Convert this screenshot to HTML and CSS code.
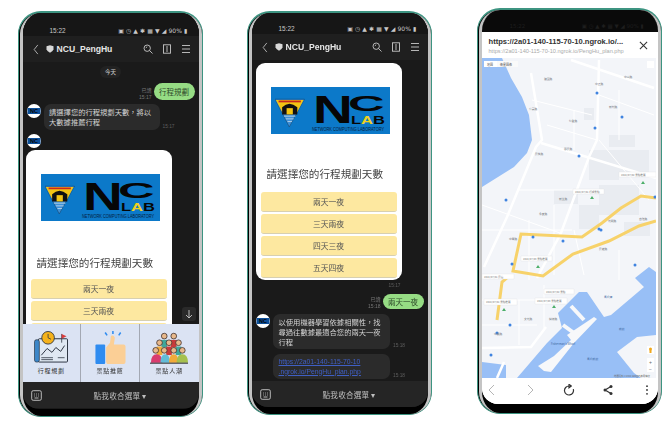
FILE: index.html
```html
<!DOCTYPE html>
<html lang="zh-Hant">
<head>
<meta charset="utf-8">
<title>NCU_PengHu</title>
<link rel="stylesheet" href="styles.css">
</head>
<body>
<svg class="defs" width="0" height="0">
  <symbol id="shield" viewBox="0 0 8 8"><path d="M.5 1.2 4 .3l3.5.9v3Q7 6.500 4 7.700 1 6.500.5 4.200z" class="ic-fill"/></symbol>
  <symbol id="search" viewBox="0 0 10 10"><circle cx="4.200" cy="4.200" r="3.200" class="ic"/><path d="m6.500 6.500 3 3M2.800 3.800l1.400-1" class="ic"/></symbol>
  <symbol id="note" viewBox="0 0 10 10"><rect x="1.500" y=".8" width="7" height="8.400" class="ic"/><path d="M4 3h2M4 5h2M4 7h2" class="ic"/></symbol>
  <symbol id="menu" viewBox="0 0 10 10"><path d="M1 1.500h8M1 5h8M1 8.500h8" class="ic"/></symbol>
  <symbol id="kbd" viewBox="0 0 11 11"><rect x=".7" y=".7" width="9.600" height="9.600" rx="1.500" class="ic"/><path d="M3 4h.8M5 4h.8M7.200 4H8M3 6h.8M5 6h.8M7.200 6H8M3.500 8h4" class="ic"/></symbol>
  <symbol id="badge" viewBox="0 0 37 32">
    <polygon points="0,0 33,0 16,31" class="lg-blue"/>
    <polygon points="1,1 32,1 24,16 9,16" class="lg-yellow"/>
    <path d="M4 2.500h25" class="lg-red"/>
    <path d="M8 9q8-8 17 0v8H8z" class="lg-black"/>
    <rect x="13" y="10" width="7" height="7" class="lg-yellow"/>
    <path d="M10 19h13M12 22h9M14 25h5" class="lg-white"/>
  </symbol>
</svg>

<main class="stage">

  <section class="phone">
    <div class="bezel">
      <div class="screen">
        <div class="status"><span class="time">15:22</span><span class="sys">▣ ◷ ▲ ✱ ▦ ▼ ◢ 90% ▮</span></div>
        <header class="head">
          <svg class="back" viewBox="0 0 6 12"><path d="M5 1 1 6l4 5" class="ic"/></svg>
          <svg class="shield"><use href="#shield"/></svg>
          <b class="name">NCU_PengHu</b>
          <svg class="hicon"><use href="#search"/></svg>
          <svg class="hicon"><use href="#note"/></svg>
          <svg class="hicon"><use href="#menu"/></svg>
        </header>
        <div class="chat chat-a">
          <div class="date"><span>今天</span></div>
          <div class="me">
            <div class="meta"><span>已讀</span><span>15:17</span></div>
            <div class="green">行程規劃</div>
          </div>
          <div class="bot">
            <svg class="ava" viewBox="0 0 14 14"><circle cx="7" cy="7" r="7" class="av-w"/><rect x="0.500" y="4" width="13" height="6" class="av-b"/><text x="7" y="9" class="av-t">NC</text></svg>
            <div class="gray w116">請選擇您的行程規劃天數，將以大數據推薦行程</div>
            <span class="stamp">15:17</span>
          </div>
          <div class="bot">
            <svg class="ava" viewBox="0 0 14 14"><circle cx="7" cy="7" r="7" class="av-w"/><rect x="0.500" y="4" width="13" height="6" class="av-b"/><text x="7" y="9" class="av-t">NC</text></svg>
          </div>
          <div class="card card-a">
            <svg class="logo" viewBox="0 0 119 47">
              <rect width="119" height="47" class="lg-bg"/>
              <use href="#badge" x="4" y="11" width="33" height="31"/>
              <text transform="translate(42 36) scale(1.450 1)" class="lg-n">N</text>
              <text transform="translate(77 24) scale(2.300 1)" class="lg-c">C</text>
              <text x="80" y="37" class="lg-lab" textLength="34" lengthAdjust="spacingAndGlyphs">L<tspan class="lg-a">A</tspan>B</text>
              <text x="41" y="44" class="lg-sub" textLength="72" lengthAdjust="spacingAndGlyphs">NETWORK COMPUTING LABORATORY</text>
            </svg>
            <div class="ctitle">請選擇您的行程規劃天數</div>
            <div class="opts">
              <div class="opt">兩天一夜</div>
              <div class="opt">三天兩夜</div>
              <div class="opt">四天三夜</div>
            </div>
          </div>
          <div class="down"><svg viewBox="0 0 10 10"><path d="M5 1v8M2 6l3 3 3-3" class="ic"/></svg></div>
        </div>
        <nav class="rich">
          <div class="cell">
            <svg class="ri" viewBox="0 0 36 34">
              <rect x="5" y="8" width="30" height="24" rx="1" class="r-board"/>
              <rect x="1" y="9" width="5" height="23" rx="2" class="r-scroll"/>
              <path d="M8 25l6-7 5 4 4-5 5 4 4-6" class="r-line"/>
              <path d="M8 27.500h12M8 29.500h12M25 27.500h7" class="r-thin"/>
              <circle cx="15" cy="7" r="6.500" class="r-clock"/>
              <path d="M15 3v4l3 1.500" class="r-thin"/>
              <path d="M29 3v9" class="r-thin"/>
              <path d="M29 3l5 2.500-5 2.500z" class="r-flag"/>
            </svg>
            <span>行程規劃</span>
          </div>
          <div class="cell">
            <svg class="ri" viewBox="0 0 36 34">
              <rect x="3" y="14" width="10" height="20" rx="1" class="r-cuff"/>
              <path d="M14 17l4-5 1-7q3-1 4 2l-1 7h10q2 0 2 2v16q0 2-2 2H15l-1-2z" class="r-thumb"/>
              <path d="M21 0v3M13 1.500l2 3M29 1.500l-2 3" class="r-ray"/>
            </svg>
            <span>景點推薦</span>
          </div>
          <div class="cell">
            <svg class="ri" viewBox="0 0 40 34">
              <rect x="12" y="9" width="6" height="8" class="c-teal"/><rect x="22" y="9" width="6" height="8" class="c-red"/>
              <rect x="7" y="16" width="6" height="9" class="c-org"/><rect x="17" y="16" width="6" height="9" class="c-red"/><rect x="27" y="16" width="6" height="9" class="c-teal"/>
              <g class="r-heads">
                <circle cx="15" cy="5" r="3"/><circle cx="25" cy="5" r="3"/>
                <circle cx="10" cy="12" r="3"/><circle cx="20" cy="12" r="3"/><circle cx="30" cy="12" r="3"/>
                <circle cx="6" cy="20" r="3"/><circle cx="15" cy="20" r="3"/><circle cx="25" cy="20" r="3"/><circle cx="34" cy="20" r="3"/>
              </g>
              <path d="M1 33q0-9 6-9t6 9z" class="c-pink"/>
              <path d="M11 33q0-9 5-9t5 9z" class="c-blue"/>
              <path d="M20 33q0-9 5-9t5 9z" class="c-org"/>
              <path d="M28 33q0-9 6-9t6 9z" class="c-lime"/>
              <path d="M0 33.500h40" class="r-base"/>
            </svg>
            <span>景點人潮</span>
          </div>
        </nav>
        <footer class="bar">
          <svg class="kbd"><use href="#kbd"/></svg>
          <span class="fold">點我收合選單 ▾</span>
        </footer>
      </div>
    </div>
  </section>

  <section class="phone phone-b">
    <div class="bezel">
      <div class="screen screen-b">
        <div class="status status-b"><span class="time">15:22</span><span class="sys">▣ ◷ ▲ ✱ ▦ ▼ ◢ 90% ▮</span></div>
        <header class="head">
          <svg class="back" viewBox="0 0 6 12"><path d="M5 1 1 6l4 5" class="ic"/></svg>
          <svg class="shield"><use href="#shield"/></svg>
          <b class="name">NCU_PengHu</b>
          <svg class="hicon"><use href="#search"/></svg>
          <svg class="hicon"><use href="#note"/></svg>
          <svg class="hicon"><use href="#menu"/></svg>
        </header>
        <div class="chat chat-b">
          <div class="card card-b">
            <svg class="logo" viewBox="0 0 119 47">
              <rect width="119" height="47" class="lg-bg"/>
              <use href="#badge" x="4" y="11" width="33" height="31"/>
              <text transform="translate(42 36) scale(1.450 1)" class="lg-n">N</text>
              <text transform="translate(77 24) scale(2.300 1)" class="lg-c">C</text>
              <text x="80" y="37" class="lg-lab" textLength="34" lengthAdjust="spacingAndGlyphs">L<tspan class="lg-a">A</tspan>B</text>
              <text x="41" y="44" class="lg-sub" textLength="72" lengthAdjust="spacingAndGlyphs">NETWORK COMPUTING LABORATORY</text>
            </svg>
            <div class="ctitle">請選擇您的行程規劃天數</div>
            <div class="opts">
              <div class="opt">兩天一夜</div>
              <div class="opt">三天兩夜</div>
              <div class="opt">四天三夜</div>
              <div class="opt">五天四夜</div>
            </div>
          </div>
          <div class="cstamp">15:17</div>
          <div class="me me-b">
            <div class="meta"><span>已讀</span><span>15:18</span></div>
            <div class="green">兩天一夜</div>
          </div>
          <div class="bot bot-b">
            <svg class="ava" viewBox="0 0 14 14"><circle cx="7" cy="7" r="7" class="av-w"/><rect x="0.500" y="4" width="13" height="6" class="av-b"/><text x="7" y="9" class="av-t">NC</text></svg>
            <div class="gray w117 tall">以使用機器學習依據相關性，找尋過往數據最適合您的兩天一夜行程</div>
            <span class="stamp">15:18</span>
          </div>
          <div class="bot bot-c">
            <span class="ava-gap"></span>
            <a class="gray w117 link">https://2a01-140-115-70-10<br>.ngrok.io/PengHu_plan.php</a>
            <span class="stamp">15:18</span>
          </div>
        </div>
        <footer class="bar">
          <svg class="kbd"><use href="#kbd"/></svg>
          <span class="fold">點我收合選單 ▾</span>
        </footer>
      </div>
    </div>
  </section>

  <section class="phone phone-c">
    <div class="bezel">
      <div class="screen screen-c">
        <div class="notch"><span>15:22</span><span>▣ ◷ ▲ ✱ ▦ ▼ ◢ 90% ▮</span></div>
        <header class="wtop">
          <div class="wtxt">
            <b>https://2a01-140-115-70-10.ngrok.io/...</b>
            <span>https://2a01-140-115-70-10.ngrok.io/PengHu_plan.php</span>
          </div>
          <svg class="close" viewBox="0 0 10 10"><path d="M1 1l8 8M9 1 1 9" class="ic-dk"/></svg>
        </header>
        <svg class="map" viewBox="483 58 174 320">
          <rect x="483" y="58" width="174" height="320" class="m-land"/>
          <g class="m-block">
            <rect x="590" y="150" width="30" height="30"/><rect x="600" y="185" width="40" height="30"/>
            <rect x="620" y="150" width="30" height="26"/><rect x="555" y="190" width="24" height="14"/>
            <rect x="580" y="205" width="20" height="24"/><rect x="610" y="135" width="26" height="12"/>
            <rect x="625" y="222" width="26" height="14"/><rect x="585" y="108" width="10" height="12"/>
          </g>
          <polygon points="483,58 503,58 512,78 523,97 530,115 533,140 528,153 515,167 483,187" class="m-water"/>
          <polygon points="483,362 507,365 507,378 483,378" class="m-water"/>
          <polygon points="518,378 548,343 563,328 559,313 580,292 588,292 605,317 612,315 645,287 636,278 650,267 657,272 657,335 638,337 618,352 635,373 642,378" class="m-water"/>
          <polygon points="539,366 555,356 572,340 568,335 595,317 598,319 575,343 552,372 545,371" class="m-pier"/>
          <path d="M572 306l13 14M564 325l11 8" class="m-pierline"/>
          <g class="m-road">
            <path d="M532 73l11 67-6 7-29 70-23 50"/>
            <path d="M572 60l83 28"/>
            <path d="M600 60l-2 80-8 17-28 76-24 45"/>
            <path d="M542 143l115 35"/>
            <path d="M482 348l50-1 15-20"/>
            <path d="M498 378l7-16"/>
          </g>
          <g class="m-minor">
            <path d="M483 205l78 28M483 230l90 0M520 190l60 0M533 100l60 15M600 95l55 20M548 125l50 15"/>
            <path d="M530 220v60M555 205v70M575 230l10 45M620 250v30M483 300h70M520 300v45M545 285v45M483 325h55"/>
            <path d="M600 140l50 60M575 110v40M620 90v50"/>
          </g>
          <path d="M657 198l-15-2-20 12-19 15-20 14-61-3-8 37 30 5 30-22 36-13 30-15 17-5" class="m-yellow"/>
          <path d="M510 276l-7 6-5 38" class="m-yellow"/>
          <g class="m-dot">
            <circle cx="598" cy="93" r="1.500"/><circle cx="623" cy="117" r="1.500"/><circle cx="596" cy="128" r="1.500"/>
            <circle cx="580" cy="156" r="1.500"/><circle cx="507" cy="200" r="1.500"/><circle cx="534" cy="237" r="1.500"/>
            <circle cx="564" cy="241" r="1.500"/><circle cx="600" cy="229" r="1.500"/><circle cx="602" cy="230" r="1.500"/>
            <circle cx="513" cy="264" r="1.500"/><circle cx="636" cy="265" r="1.500"/><circle cx="656" cy="197" r="1.500"/>
            <circle cx="511" cy="325" r="1.500"/><circle cx="498" cy="333" r="1.500"/><circle cx="492" cy="355" r="1.500"/>
          </g>
          <g class="m-chip">
            <rect x="574" y="189" width="31" height="5"/>
            <rect x="620" y="172" width="37" height="5"/>
            <rect x="522" y="256" width="31" height="5"/>
            <rect x="483" y="274" width="32" height="5"/>
            <rect x="485" y="299" width="33" height="6"/>
            <rect x="545" y="289" width="30" height="5"/>
            <rect x="536" y="298" width="32" height="6"/>
          </g>
          <g class="m-pin">
            <path d="M591 199l2-3 2 3z"/><path d="M642 184l2-3 2 3z"/><path d="M537 268l2-3 2 3z"/>
            <path d="M503 311l2-3 2 3z"/><path d="M553 308l2-3 2 3z"/>
          </g>
          <g class="m-txt">
            <text x="576" y="193">2022/07/01 行程景點</text><text x="622" y="176">2022/07/02 景點推薦</text>
            <text x="524" y="260">2022/07/03 景點推薦</text><text x="485" y="278">2022/07/01 民宿</text>
            <text x="487" y="303">2022/07/01 景點推薦</text><text x="547" y="293">2022/07/02 景點</text>
            <text x="538" y="302">2022/07/03 景點推薦</text>
          </g>
          <g class="m-rt">
            <text x="536" y="155">民族路</text><text x="596" y="85">中正路</text><text x="565" y="150">惠民路</text>
            <text x="609" y="222">光明路</text><text x="600" y="250">民權路</text><text x="510" y="240">中華路</text>
            <text x="530" y="110">介壽路</text><text x="560" y="200">新生路</text><text x="625" y="78">中山路</text>
            <text x="495" y="335">中興路</text><text x="545" y="80">建國路</text><text x="570" y="122">仁愛路</text>
            <text x="610" y="108">新村路</text><text x="540" y="215">永安路</text><text x="640" y="220">自強路</text>
            <text x="525" y="320">文光路</text><text x="550" y="320">樹德路</text>
          </g>
          <g class="m-wt"><text x="605" y="298">馬公港</text><text x="588" y="360">馬公航道</text><text x="620" y="330">航道</text><text x="552" y="345">Fisherman's Wharf</text></g>
          <rect x="485" y="61" width="13" height="6" class="m-ctl"/><rect x="498" y="61" width="21" height="6" class="m-ctl2"/>
          <text x="488" y="66" class="m-ctxt">地圖</text><text x="501" y="66" class="m-ctxt">衛星圖像</text>
          <rect x="648" y="61" width="7" height="7" class="m-ctl"/>
          <rect x="648" y="346" width="7" height="8" class="m-ctl"/><circle cx="651.500" cy="349" r="1.500" class="m-peg"/><rect x="650.500" y="350" width="2" height="3" class="m-peg"/>
          <rect x="648" y="358" width="7" height="14" class="m-ctl"/>
          <text x="651.500" y="364" class="m-zoom">+</text><text x="651.500" y="371" class="m-zoom">−</text>
          <text x="615" y="377" class="m-attr">地圖資料 ©2022 Google 使用條款</text>
        </svg>
        <footer class="tools">
          <svg viewBox="0 0 12 12"><path d="M8 1 3 6l5 5" class="ic-lt"/></svg>
          <svg viewBox="0 0 12 12"><path d="m4 1 5 5-5 5" class="ic-lt"/></svg>
          <svg viewBox="0 0 12 12"><path d="M6 2a4.500 4.500 0 1 0 4.300 3.200M6 .3v3.400L8.300 2z" class="ic-dk"/></svg>
          <svg viewBox="0 0 12 12"><path d="M9 2.500 3 6l6 3.500" class="ic-dk"/><circle cx="9" cy="2.500" r="1.500" class="dk-fill"/><circle cx="3" cy="6" r="1.500" class="dk-fill"/><circle cx="9" cy="9.500" r="1.500" class="dk-fill"/></svg>
          <svg viewBox="0 0 12 12"><circle cx="6" cy="2.200" r=".9" class="dk-fill"/><circle cx="6" cy="6" r=".9" class="dk-fill"/><circle cx="6" cy="9.800" r=".9" class="dk-fill"/></svg>
        </footer>
      </div>
    </div>
  </section>

</main>
</body>
</html>
```

FILE: styles.css
```css
* { box-sizing: border-box; }
html, body { margin: 0; padding: 0; background: #fff; }
body { width: 672px; height: 421px; overflow: hidden; font-family: "Noto Sans CJK TC", "Noto Sans", sans-serif; }
.defs { position: absolute; }
.stage { display: flex; align-items: flex-start; gap: 44px; padding: 11px 0 0 18px; filter: blur(.4px); }

/* phone frame */
.phone { width: 185px; height: 406px; flex: none; border: solid #3d9481; border-width: 2px 1.500px 1.500px; border-radius: 23px; background: #000; padding: 0 .5px; }
.phone-b { height: 404px; }
.phone-c { height: 406px; margin: -3px 0 0 1px; }
.bezel { height: 100%; border-left: 3.500px solid #c4c4c4; border-right: 3.500px solid #c4c4c4; border-radius: 21px; background: #000; padding-bottom: 7px; overflow: hidden; }
.phone-c .bezel { padding-bottom: 9px; }
.screen { height: 100%; display: flex; flex-direction: column; background: #1a1a1a; border-radius: 14px 14px 16px 16px; overflow: hidden; }

/* status + header */
.status { height: 23px; flex: none; display: flex; align-items: flex-end; justify-content: space-between; padding: 0 11px 1.500px 27px; font-size: 6.400px; line-height: 9px; color: #c8c8c8; background: #161616; font-family: "Liberation Sans", sans-serif; }
.status-b { height: 21px; padding-bottom: 1px; }
.sys { font-size: 6px; letter-spacing: .1px; white-space: nowrap; font-family: "DejaVu Sans", sans-serif; }
.head { height: 26px; flex: none; display: flex; align-items: center; padding: 0 8px 0 10px; background: #1f1f1f; }
.back { width: 6px; height: 11px; margin-right: 7px; }
.shield { width: 8px; height: 8px; margin-right: 3px; }
.name { flex: 1; font: bold 8.600px "Liberation Sans", sans-serif; color: #e6e6e6; }
.hicon { width: 10px; height: 10px; margin-left: 9px; }
.ic { fill: none; stroke: #c8c8c8; stroke-width: .9; }
.ic-fill { fill: #d8d8d8; }
.ic-dk { fill: none; stroke: #333; stroke-width: 1.200; }
.ic-lt { fill: none; stroke: #b5b5b5; stroke-width: 1; }
.dk-fill { fill: #333; }

/* chat */
.chat { position: relative; flex: 1; min-height: 0; overflow: hidden; }
.chat-a { height: 262px; flex: none; }
.date { margin-top: 4px; display: flex; justify-content: center; }
.date span { font-size: 5.500px; line-height: 12px; color: #ccc; background: #222; padding: 0 5px; border-radius: 6px; }
.me { display: flex; justify-content: flex-end; align-items: flex-end; gap: 2px; padding-right: 4px; margin-top: 5px; }
.meta { display: flex; flex-direction: column; align-items: flex-end; font: 5px/6.500px "Liberation Sans", "Noto Sans CJK TC", sans-serif; color: #777; }
.green { width: 41px; height: 17px; border-radius: 9px; background: #96dc84; color: #2e4a2a; font-size: 7.500px; line-height: 17px; text-align: center; }
.me-b { margin-top: 4px; }
.me-b .green { height: 15px; line-height: 15px; }
.bot { display: flex; align-items: flex-start; padding-left: 4px; margin-top: 4px; }
.bot-b { margin-top: 5px; padding-left: 4.500px; }
.bot-c { margin-top: 5px; padding-left: 4.500px; }
.ava { width: 14px; height: 14px; flex: none; }
.ava-gap { width: 14px; flex: none; }
.gray { margin-left: 3px; background: #2b2b2b; border-radius: 7px; padding: 3px 4px 2px 5.500px; font-size: 7.300px; line-height: 10px; color: #d2d2d2; flex: none; }
.w116 { width: 116px; height: 26px; }
.w117 { width: 117px; }
.tall { height: 35px; padding-top: 3px; }
.link { height: 25px; padding-top: 3px; font: 6.800px/9.500px "Liberation Sans", sans-serif; color: #3f5fc4; text-decoration: underline; }
.stamp { align-self: flex-end; margin-left: 3px; font: 4.800px/7px "Liberation Sans", sans-serif; color: #5e5e5e; }
.cstamp { margin: 2px 0 0 137px; font: 4.800px/8px "Liberation Sans", sans-serif; color: #5e5e5e; }

/* flex card */
.card { width: 146px; background: #fff; border-radius: 9px; padding: 24px 5px 0; }
.card-a { margin: 2px 0 0 3px; }
.card-b { margin: 3px 0 0 4px; height: 217px; }
.logo { display: block; width: 119px; height: 47px; margin-left: 10px; }
.ctitle { margin: 34px 0 8px 6px; font-size: 10.600px; line-height: 16px; color: #444; white-space: nowrap; }
.card-b .ctitle { margin-top: 32px; margin-bottom: 10px; }
.opts { display: flex; flex-direction: column; gap: 2.500px; }
.opt { height: 19.500px; background: #fde8a0; border-radius: 3px; border-bottom: 1px solid #d8d0b0; font-size: 7.800px; line-height: 19px; text-align: center; color: #555; }
.down { position: absolute; right: 3px; bottom: 3px; width: 14px; height: 14px; background: #2a2a2a; border-radius: 3px; padding: 2px; }
.down svg { display: block; width: 10px; height: 10px; }

/* logo parts */
.lg-bg { fill: #0c79c9; }
.lg-blue { fill: #3d8fd6; stroke: #123; stroke-width: .4; }
.lg-yellow { fill: #f3c514; }
.lg-red { stroke: #c8281e; stroke-width: 2; fill: none; }
.lg-black { fill: #111; }
.lg-white { stroke: #d6e6f0; stroke-width: .8; fill: none; }
.lg-n { font: 900 38px "Liberation Sans", sans-serif; fill: #060606; }
.lg-c { font: 900 22px "Liberation Sans", sans-serif; fill: #060606; }
.lg-lab { font: bold 10px "Liberation Sans", sans-serif; fill: #060606; }
.lg-a { fill: #f0d020; }
.lg-sub { font: 4.500px "Liberation Sans", sans-serif; fill: #06203a; }
.av-w { fill: #fff; }
.av-b { fill: #0c4f9a; }
.av-t { font: bold 5.500px "Liberation Sans", sans-serif; fill: #050505; text-anchor: middle; }

/* rich menu */
.rich { height: 58px; flex: none; display: grid; grid-template-columns: repeat(3, 1fr); background: #dbe3f3; }
.cell { display: flex; flex-direction: column; align-items: center; justify-content: flex-end; padding-bottom: 7px; border-right: 1px solid #a3a8b3; font-size: 6px; line-height: 8px; letter-spacing: .8px; color: #333; }
.cell:last-child { border-right: 0; }
.ri { width: 38px; height: 33px; margin-bottom: 3px; }
.r-board { fill: #dfe8f2; stroke: #2a3340; stroke-width: 1; }
.r-scroll { fill: #3c86c8; stroke: #2a3340; stroke-width: .7; }
.r-line { fill: none; stroke: #2a3340; stroke-width: 1; }
.r-thin { fill: none; stroke: #2a3340; stroke-width: .8; }
.r-base { fill: none; stroke: #222; stroke-width: 1; }
.r-clock { fill: #f5b21b; stroke: #2a3340; stroke-width: .9; }
.r-flag { fill: #d83c3c; }
.r-cuff { fill: #2f8cf0; }
.r-thumb { fill: #fbcf96; }
.r-ray { stroke: #2f8cf0; stroke-width: 1.600; fill: none; }
.r-heads { fill: #e8b98c; stroke: #3a2a26; stroke-width: .8; }
.c-red { fill: #c83a3a; }
.c-pink { fill: #d93c6e; }
.c-teal { fill: #3fa79a; }
.c-blue { fill: #62bcd8; }
.c-org { fill: #f2ab3a; }
.c-lime { fill: #a6c04e; }

/* bottom bar */
.bar { height: 26px; flex: none; display: flex; align-items: center; padding: 0 8px 0 8px; background: #252525; }
.kbd { width: 11px; height: 11px; flex: none; }
.fold { flex: 1; padding-left: 8px; text-align: center; font-size: 7.600px; letter-spacing: .2px; color: #bdbdbd; }

/* browser phone */
.screen-c { background: #fff; }
.notch { height: 22px; flex: none; display: flex; justify-content: space-between; align-items: flex-end; padding: 0 14px 3px 28px; background: #0a0a0a; font-size: 5.500px; color: #1e1e1e; font-family: "DejaVu Sans", sans-serif; }
.wtop { height: 26px; flex: none; display: flex; align-items: center; padding: 0 9px 0 7px; background: #fff; }
.wtxt { flex: 1; min-width: 0; display: flex; flex-direction: column; }
.wtxt b { font: bold 7.600px/11px "Liberation Sans", sans-serif; color: #333; white-space: nowrap; }
.wtxt span { font: 5.600px/8px "Liberation Sans", sans-serif; color: #aaa; white-space: nowrap; }
.close { width: 9px; height: 9px; flex: none; margin-right: 1px; }
.map { display: block; width: 174px; height: 320px; flex: none; }
.tools { flex: 1; display: flex; justify-content: space-between; align-items: center; padding: 0 5px 2px 4px; background: #fff; }
.tools svg { width: 12px; height: 12px; }
.m-land { fill: #f3f5f9; }
.m-block { fill: #e9ecf1; }
.m-water { fill: #98bff6; }
.m-pier { fill: #f7f8fa; }
.m-pierline { fill: none; stroke: #f7f8fa; stroke-width: 4; }
.m-road { fill: none; stroke: #fff; stroke-width: 2.500; }
.m-minor { fill: none; stroke: #fff; stroke-width: 1; }
.m-yellow { fill: none; stroke: #f7d26a; stroke-width: 3; }
.m-dot { fill: #3f83e0; }
.m-chip { fill: #fff; stroke: #ddd; stroke-width: .3; }
.m-pin { fill: #4caf6a; }
.m-txt { font-size: 2.600px; fill: #777; }
.m-rt { font-size: 2.800px; fill: #777c84; }
.m-wt { font-size: 2.800px; fill: #3c66a0; }
.m-ctl { fill: #fff; }
.m-ctl2 { fill: #fafafa; }
.m-ctxt { font-size: 3px; fill: #555; }
.m-peg { fill: #f0a81e; }
.m-zoom { font: 5px "Liberation Sans", sans-serif; fill: #666; text-anchor: middle; }
.m-attr { font-size: 2.400px; fill: #666; }
```
